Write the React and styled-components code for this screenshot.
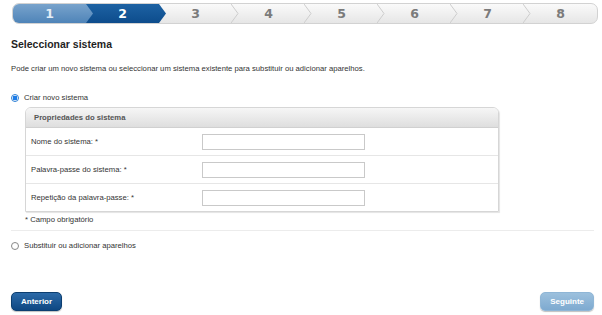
import React from 'react'
import styled, { createGlobalStyle } from 'styled-components'

const GlobalStyle = createGlobalStyle`
  html, body {
    margin: 0;
    padding: 0;
    background: #fff;
  }
  body {
    font-family: 'Liberation Sans', Arial, sans-serif;
    color: #333;
  }
`

const Page = styled.div`
  width: 602px;
  height: 315px;
  box-sizing: border-box;
  display: flex;
  flex-direction: column;
  padding: 3px 8px 4px 11px;
`

const StepBar = styled.div`
  display: flex;
  height: 19px;
  margin: 0 -4px 0 1px;
  border: 1px solid #d2d2d2;
  border-radius: 7px;
  overflow: hidden;
  background: linear-gradient(#fafafa, #e6e6e6);
`

const stepBg = {
  done: 'linear-gradient(#78a3cc, #4f84b8)',
  active: 'linear-gradient(#1d62a3, #0d4c8c)',
  todo: 'transparent',
}

const stepColor = {
  done: '#e4edf6',
  active: '#fff',
  todo: '#7b7b7b',
}

const Step = styled.div`
  position: relative;
  flex: 1;
  margin-right: ${p => (p.$last ? 0 : -7)}px;
  padding-right: ${p => (p.$last ? 0 : 7)}px;
  display: flex;
  align-items: center;
  justify-content: center;
  font-family: 'DejaVu Sans', sans-serif;
  font-weight: bold;
  font-size: 12.5px;
  color: ${p => stepColor[p.$state]};
  background: ${p => stepBg[p.$state]};
  z-index: ${p => p.$z};
  clip-path: ${p =>
    p.$state === 'todo'
      ? 'none'
      : 'polygon(0 0, calc(100% - 7px) 0, 100% 50%, calc(100% - 7px) 100%, 0 100%)'};
`

const Chevron = styled.svg`
  position: absolute;
  right: 0;
  top: 0;
  width: 8px;
  height: 100%;
`

const Title = styled.h1`
  margin: 14px 0 0;
  font-size: 10.5px;
  font-weight: bold;
  color: #1f1f1f;
`

const Intro = styled.p`
  margin: 14px 0 0;
  font-size: 7.7px;
`

const Option = styled.label`
  display: flex;
  align-items: center;
  gap: 5px;
  font-size: 7.7px;
  margin-top: ${p => p.$top}px;
`

const Radio = styled.span`
  width: 8px;
  height: 8px;
  border-radius: 50%;
  box-sizing: border-box;
  border: 1px solid ${p => (p.$checked ? '#2b7fd6' : '#888')};
  background: ${p =>
    p.$checked ? 'radial-gradient(circle, #1c7ce8 0 2.2px, #fff 2.6px)' : '#fff'};
`

const Panel = styled.div`
  margin: 5px 0 0 14px;
  width: 472px;
  border: 1px solid #d6d6d6;
  border-radius: 6px 6px 0 0;
  box-shadow: 1px 1px 1px #e4e4e4;
`

const PanelHead = styled.div`
  height: 19px;
  display: flex;
  align-items: center;
  padding-left: 8px;
  font-size: 7.7px;
  font-weight: bold;
  color: #555;
  border-radius: 5px 5px 0 0;
  background: linear-gradient(#f6f6f6, #dedede);
  border-bottom: 1px solid #d0d0d0;
`

const Row = styled.div`
  display: grid;
  grid-template-columns: 171px 163px;
  align-items: center;
  height: 27px;
  padding-left: 5px;
  font-size: 7.7px;
  border-top: ${p => (p.$first ? 'none' : '1px solid #e6e6e6')};
`

const Field = styled.div`
  height: 16px;
  box-sizing: border-box;
  border: 1px solid #c9c9c9;
  background: #fff;
`

const Note = styled.div`
  margin: 3px 0 0 14px;
  font-size: 7.7px;
`

const Rule = styled.hr`
  margin: 6px 0 0;
  border: 0;
  border-top: 1px solid #ececec;
`

const Footer = styled.div`
  margin-top: auto;
  display: flex;
  justify-content: space-between;
  align-items: center;
`

const Button = styled.button`
  height: 19px;
  padding: 0 9px;
  border-radius: 5px;
  font-family: 'Liberation Sans', Arial, sans-serif;
  font-size: 8px;
  font-weight: bold;
  color: #fff;
  border: 1px solid ${p => (p.$disabled ? '#8fb6d6' : '#0c3e70')};
  background: ${p =>
    p.$disabled
      ? 'linear-gradient(#9cc0dd, #7eaad0)'
      : 'linear-gradient(#2c6aa8, #0e4782)'};
  box-shadow: 0 1px 1px rgba(0, 0, 0, 0.25);
`

const steps = [1, 2, 3, 4, 5, 6, 7, 8]
const current = 2

const fields = [
  'Nome do sistema: *',
  'Palavra-passe do sistema: *',
  'Repetição da palavra-passe: *',
]

export default function App() {
  return (
    <>
      <GlobalStyle />
      <Page>
        <StepBar>
          {steps.map(n => {
            const state = n < current ? 'done' : n === current ? 'active' : 'todo'
            const last = n === steps.length
            return (
              <Step key={n} $state={state} $last={last} $z={10 - n}>
                {n}
                {state === 'todo' && !last && (
                  <Chevron viewBox="0 0 8 19" preserveAspectRatio="none">
                    <polyline points="0,0 7,9.5 0,19" fill="none" stroke="#cdcdcd" strokeWidth="1" />
                  </Chevron>
                )}
              </Step>
            )
          })}
        </StepBar>

        <Title>Seleccionar sistema</Title>
        <Intro>
          Pode criar um novo sistema ou seleccionar um sistema existente para substituir ou adicionar aparelhos.
        </Intro>

        <Option $top={20}>
          <Radio $checked />
          Criar novo sistema
        </Option>

        <Panel>
          <PanelHead>Propriedades do sistema</PanelHead>
          {fields.map((f, i) => (
            <Row key={f} $first={i === 0}>
              <span>{f}</span>
              <Field />
            </Row>
          ))}
        </Panel>

        <Note>* Campo obrigatório</Note>
        <Rule />

        <Option $top={10}>
          <Radio />
          Substituir ou adicionar aparelhos
        </Option>

        <Footer>
          <Button>Anterior</Button>
          <Button $disabled>Seguinte</Button>
        </Footer>
      </Page>
    </>
  )
}
